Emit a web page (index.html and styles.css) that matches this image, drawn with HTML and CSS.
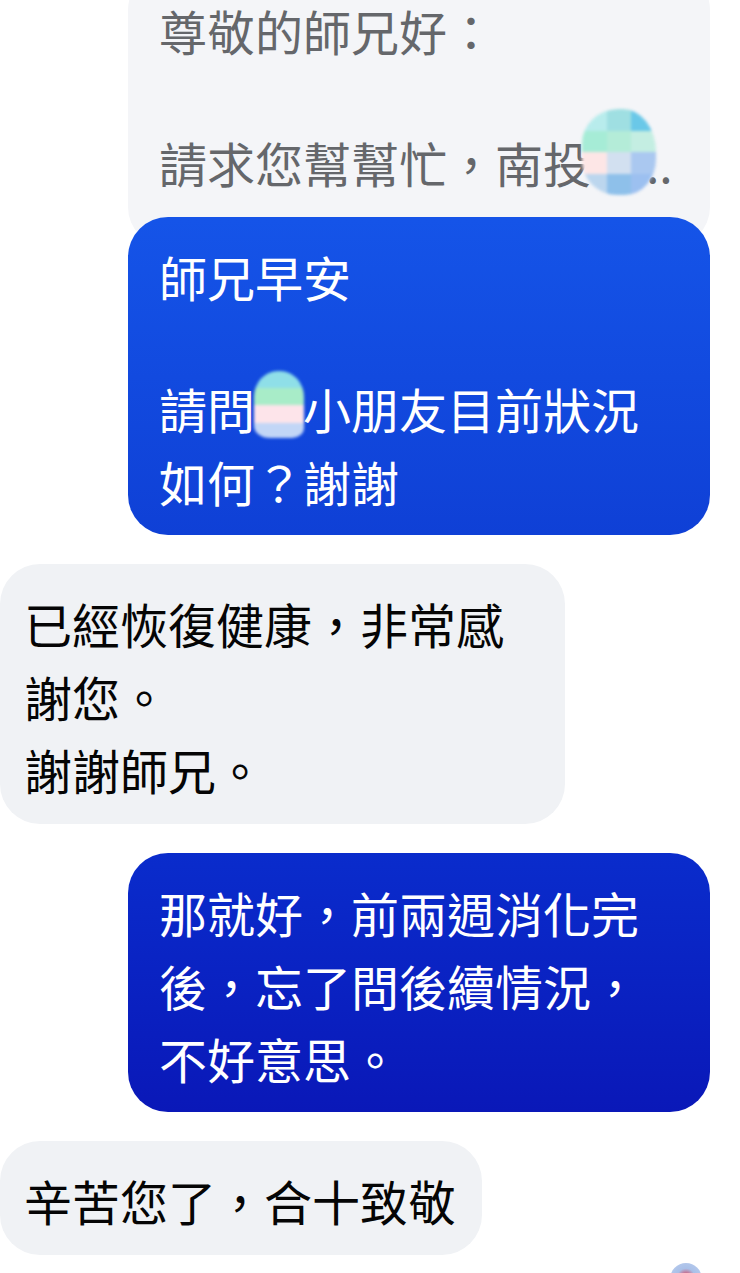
FILE: index.html
```
<!DOCTYPE html>
<html lang="zh-Hant">
<head>
  <meta charset="UTF-8" />
  <meta name="viewport" content="width=device-width, initial-scale=1.0" />
  <title>Messenger</title>
  <link rel="stylesheet" href="styles.css">
</head>
<body>
  <div class="chat">
    <div class="out-group">
      <div class="reply-quote">
        <p>尊敬的師兄好：</p>
        <p class="nowrap">請求您幫幫忙，南投<span class="blur blur-quote"><i class="c1"></i><i class="c2"></i><i class="c3"></i><i class="c4"></i><i class="c5"></i><i class="c6"></i><i class="c7"></i><i class="c8"></i><i class="c9"></i><i class="c10"></i><i class="c11"></i><i class="c12"></i></span>..</p>
      </div>
      <div class="bubble bubble-out">
        <p>師兄早安</p>
        <p>請問<span class="blur blur-name"><i class="n1"></i><i class="n2"></i><i class="n3"></i><i class="n4"></i></span>小朋友目前狀況如何？謝謝</p>
      </div>
    </div>

    <div class="bubble bubble-in">
      <p>已經恢復健康，非常感謝您。<br>謝謝師兄。</p>
    </div>

    <div class="bubble bubble-out">
      <p>那就好，前兩週消化完後，忘了問後續情況，不好意思。</p>
    </div>

    <div class="bubble bubble-in">
      <p>辛苦您了，合十致敬</p>
    </div>

    <div class="seen"><span class="seen-dot"></span></div>
  </div>
</body>
</html>
```

FILE: styles.css
```
body {
  margin: 0;
  background: #fff;
  font-family: "Noto Sans CJK TC", "Noto Sans", sans-serif;
  font-size: 48px;
  line-height: 73px;
  overflow: hidden;
}

p {
  margin: 0;
}

.chat {
  display: flex;
  flex-direction: column;
  gap: 29px;
}

.out-group {
  display: flex;
  flex-direction: column;
  align-self: flex-end;
  width: 582px;
  margin-right: 30px;
}

.reply-quote {
  margin-top: -30px;
  padding: 24px 32px 48px 31px;
  background: #f4f5f8;
  color: #65676b;
  border-radius: 40px;
}

.reply-quote p + p,
.bubble p + p {
  margin-top: 59px;
}

.nowrap {
  white-space: nowrap;
}

.bubble {
  box-sizing: border-box;
  border-radius: 40px;
}

.out-group .bubble-out {
  position: relative;
  margin-top: -30px;
  margin-right: 0;
}

.bubble-out {
  align-self: flex-end;
  max-width: 582px;
  margin-right: 30px;
  padding: 23px 32px 17px 31px;
  color: #fff;
  background: linear-gradient(180deg, #1758ea 0, #1554e8 220px, #0f40d6 535px, #0a2ccc 853px, #0a18b8 1112px, #0812aa 1273px);
  background-attachment: fixed;
}

.bubble-in {
  align-self: flex-start;
  max-width: 565px;
  padding: 23px 26px 18px 24px;
  color: #050505;
  background: #f0f2f5;
}

/* blurred name patches */
.blur {
  display: inline-grid;
  vertical-align: top;
  overflow: hidden;
  filter: blur(1.5px);
}

.blur i {
  display: block;
}

.blur-quote {
  width: 74px;
  height: 86px;
  margin: -17px -10px 0 -9px;
  grid-template-columns: repeat(3, 1fr);
  grid-template-rows: repeat(4, 1fr);
  border-radius: 50% 45% 42% 48% / 40% 50% 42% 40%;
}

.c1 { background: #b8ecec; }
.c2 { background: #9fdfe2; }
.c3 { background: #6ac8e8; }
.c4 { background: #a6ecd6; }
.c5 { background: #b4ecd8; }
.c6 { background: #c4eee2; }
.c7 { background: #fde6e6; }
.c8 { background: #d2e0f0; }
.c9 { background: #aac8f0; }
.c10 { background: #bcd6ee; }
.c11 { background: #8ec0ea; }
.c12 { background: #9cc0f0; }

.blur-name {
  width: 50px;
  height: 67px;
  margin: -1px -1px 0 -1px;
  grid-template-rows: 1fr 1fr 1fr 0.9fr;
  border-radius: 24px 24px 12px 16px / 26px 26px 10px 12px;
}

.n1 { background: #8fdfe8; }
.n2 { background: #a8ecc8; }
.n3 { background: #fde4ea; }
.n4 { background: #c2d6f6; }

.seen {
  align-self: flex-end;
  margin: -21px 38px 0 0;
}

.seen-dot {
  display: block;
  width: 32px;
  height: 32px;
  border-radius: 50%;
  background: radial-gradient(circle at 50% 45%, #c04a6a 0, #c86a8a 4px, #a9c0e8 9px, #b4c8ec 16px);
}
```
